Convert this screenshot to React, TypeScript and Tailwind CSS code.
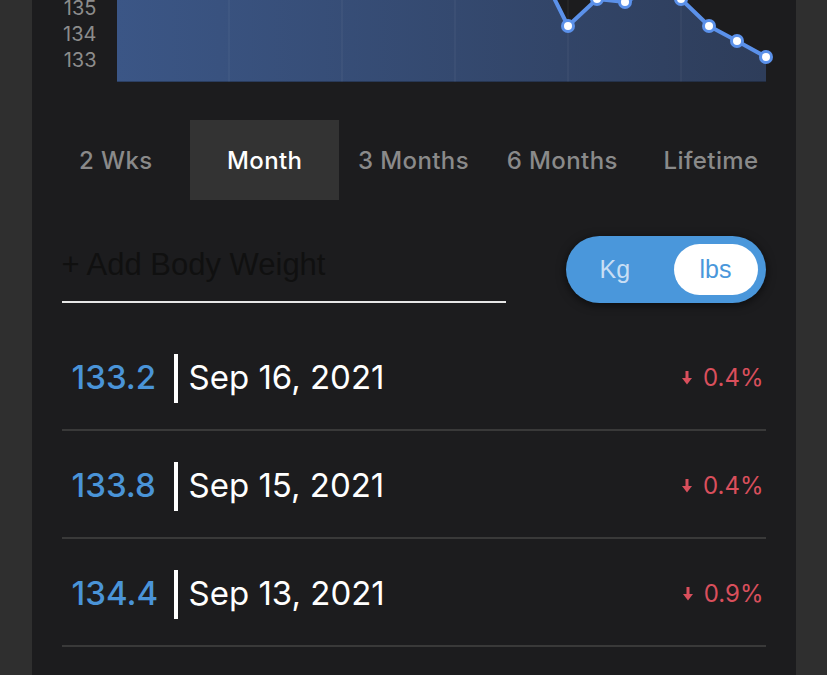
import React from 'react';

const TABS = ['2 Wks', 'Month', '3 Months', '6 Months', 'Lifetime'];

const ENTRIES = [
  { value: '133.2', date: 'Sep 16, 2021', change: '0.4%' },
  { value: '133.8', date: 'Sep 15, 2021', change: '0.4%' },
  { value: '134.4', date: 'Sep 13, 2021', change: '0.9%' },
];

// chart points in local px (649 x 82), early ones sit above the visible area
const POINTS: [number, number][] = [
  [0, -60], [28, -50], [56, -70], [85, -55], [113, -65], [141, -40], [169, -60],
  [197, -45], [226, -70], [254, -50], [282, -60], [310, -40], [338, -55], [367, -35],
  [395, -50], [423, -30], [451, 26], [480, -1], [508, 2], [536, -12], [564, -1],
  [592, 26], [620, 41], [649, 57],
];

function Chart() {
  const line = POINTS.map((p) => p.join(',')).join(' ');
  const area = `0,82 ${line} 649,82`;
  return (
    <svg width="649" height="82" viewBox="0 0 649 82" className="block overflow-visible">
      <defs>
        <linearGradient id="fill" x1="0" y1="0" x2="1" y2="0">
          <stop offset="0" stopColor="#3b5686" />
          <stop offset="1" stopColor="#2e3d5a" />
        </linearGradient>
        <clipPath id="clip">
          <rect x="-10" y="0" width="670" height="90" />
        </clipPath>
      </defs>
      <g clipPath="url(#clip)">
        <polygon points={area} fill="url(#fill)" />
        {[112, 225, 338, 451, 564].map((x) => (
          <line key={x} x1={x} y1="0" x2={x} y2="82" stroke="rgba(255,255,255,0.07)" strokeWidth="1" />
        ))}
        <line x1="0" y1="81.5" x2="649" y2="81.5" stroke="rgba(0,0,0,0.25)" strokeWidth="1" />
        <polyline points={line} fill="none" stroke="#5b91ea" strokeWidth="4" strokeLinejoin="round" />
        {POINTS.map(([x, y]) => (
          <g key={x}>
            <circle cx={x} cy={y} r="7" fill="#5b91ea" />
            <circle cx={x} cy={y} r="4" fill="#ffffff" />
          </g>
        ))}
      </g>
    </svg>
  );
}

function DownArrow() {
  return (
    <svg width="10" height="14" viewBox="0 0 10 14" className="mr-[11px]">
      <rect x="3.5" y="0" width="3" height="8" fill="#d94f5c" />
      <polygon points="0,7 10,7 5,13.5" fill="#d94f5c" />
    </svg>
  );
}

export default function App() {
  return (
    <div className="w-[827px] h-[675px] overflow-hidden bg-[#2f2f2f] flex justify-center" style={{ fontFamily: 'Inter, "Noto Sans", sans-serif' }}>
      <div className="w-[764px] h-full bg-[#1c1c1e] px-[30px]">
        {/* chart */}
        <div className="flex items-start">
          <div className="w-[55px] pr-[20px] flex flex-col items-end text-[20px] leading-[26px] text-[#8c8c8c] -mt-[5px]">
            <span>135</span>
            <span>134</span>
            <span>133</span>
          </div>
          <Chart />
        </div>

        {/* range tabs */}
        <div className="mt-[38px] -mx-[20px] flex h-[80px]">
          {TABS.map((t) => (
            <div
              key={t}
              className={`flex-1 flex items-center justify-center pt-[2px] text-[24px] tracking-[0.4px] font-medium ${t === 'Month' ? 'bg-[#333333] text-white' : 'text-[#8a8a8a]'}`}
            >
              {t}
            </div>
          ))}
        </div>

        {/* input + unit toggle */}
        <div className="mt-[36px] flex items-start justify-between">
          <div className="w-[444px] h-[67px] border-b-2 border-[#e6e6e6] flex items-center pb-[6px]">
            <span className="text-[31px] text-[#101010]" style={{ fontFamily: '"Liberation Sans", Arial, sans-serif' }}>
              + Add Body Weight
            </span>
          </div>
          <div
            className="w-[200px] h-[67px] rounded-full bg-[#4a97db] flex items-center justify-between pl-[34px] pr-[8px] shadow-[0_2px_10px_rgba(0,0,0,0.6)]"
            style={{ fontFamily: '"Liberation Sans", Arial, sans-serif' }}
          >
            <span className="text-[25px] text-[#c8def4]">Kg</span>
            <span className="w-[84px] h-[51px] rounded-full bg-white flex items-center justify-center text-[25px] text-[#4a97db]">
              lbs
            </span>
          </div>
        </div>

        {/* entries */}
        <div className="mt-[20px]">
          {ENTRIES.map((e) => (
            <div key={e.date} className="h-[108px] flex items-center border-b-2 border-[#393939] pl-[10px] pr-[2px] pt-[4px]">
              <span className="text-[33px] font-medium text-[#4a94d8] w-[102px]">{e.value}</span>
              <span className="w-[4px] h-[49px] bg-white mr-[11px]" />
              <span className="text-[33px] text-white flex-1">{e.date}</span>
              <span className="flex items-center text-[24px] text-[#d94f5c]">
                <DownArrow />
                {e.change}
              </span>
            </div>
          ))}
        </div>
      </div>
    </div>
  );
}
